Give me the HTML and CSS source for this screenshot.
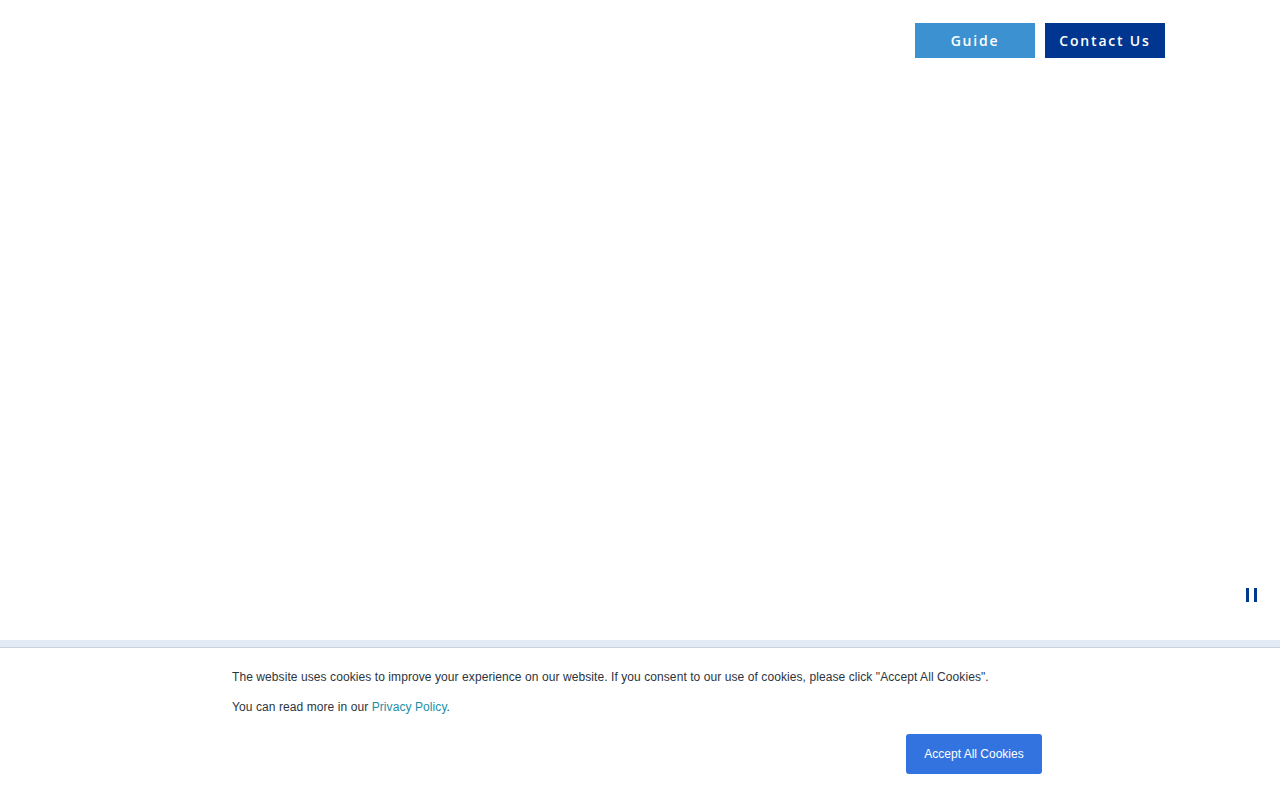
FILE: index.html
```html
<!DOCTYPE html>
<html lang="en">
<head>
    <meta charset="UTF-8">
    <meta name="viewport" content="width=device-width, initial-scale=1.0">
    <title>Home</title>
    <link rel="stylesheet" href="styles.css">
</head>
<body>
    <header class="top-bar">
        <nav class="top-links">
            <a class="btn btn-guide" href="#">Guide</a>
            <a class="btn btn-contact" href="#">Contact Us</a>
        </nav>
    </header>

    <main class="hero">
        <button class="pause" aria-label="Pause">
            <span></span><span></span>
        </button>
    </main>

    <div class="cookie-banner">
        <div class="cookie-inner">
            <p>The website uses cookies to improve your experience on our website. If you consent to our use of cookies, please click "Accept All Cookies".</p>
            <p>You can read more in our <a href="#">Privacy Policy</a>.</p>
            <div class="cookie-actions">
                <button class="accept">Accept All Cookies</button>
            </div>
        </div>
    </div>
</body>
</html>
```

FILE: styles.css
```css
body {
    margin: 0;
    background-color: #fff;
    font-family: "Liberation Sans", Arial, sans-serif;
    height: 800px;
    overflow: hidden;
    position: relative;
}

.top-bar {
    display: flex;
    justify-content: flex-end;
    padding: 23px 115px 0 0;
}

.top-links {
    display: flex;
    gap: 10px;
}

.btn {
    display: flex;
    align-items: center;
    justify-content: center;
    width: 120px;
    height: 35px;
    padding-bottom: 1px;
    box-sizing: border-box;
    color: #fff;
    text-decoration: none;
    font-family: "Open Sans", "Noto Sans", sans-serif;
    font-size: 14px;
    font-weight: 600;
    letter-spacing: 1.8px;
}

.btn-guide {
    background-color: #3c91d0;
}

.btn-contact {
    background-color: #00368f;
}

.hero {
    height: 582px;
    position: relative;
}

.pause {
    position: absolute;
    right: 23px;
    top: 530px;
    display: flex;
    gap: 5px;
    padding: 0;
    border: none;
    background: none;
    cursor: pointer;
}

.pause span {
    display: block;
    width: 3px;
    height: 14px;
    background-color: #003a8c;
}

.cookie-banner {
    position: absolute;
    left: 0;
    right: 0;
    top: 640px;
    bottom: 0;
    background-color: #fff;
    border-top: 7px solid #e3ecf6;
    box-shadow: inset 0 1px 0 #c9d2da;
}

.cookie-inner {
    width: 816px;
    margin: 0 auto;
    padding-top: 23px;
}

.cookie-inner p {
    margin: 0 0 15px;
    font-size: 12px;
    line-height: 15px;
    letter-spacing: 0.08px;
    color: #2b3440;
}

.cookie-inner a {
    color: #1a8fa6;
    text-decoration: none;
}

.cookie-actions {
    display: flex;
    justify-content: flex-end;
    padding-right: 6px;
    margin-top: 19px;
}

.accept {
    width: 136px;
    height: 40px;
    border: none;
    border-radius: 3px;
    background-color: #3373e0;
    color: #fff;
    font-family: "Liberation Sans", Arial, sans-serif;
    font-size: 12px;
    cursor: pointer;
}
```
